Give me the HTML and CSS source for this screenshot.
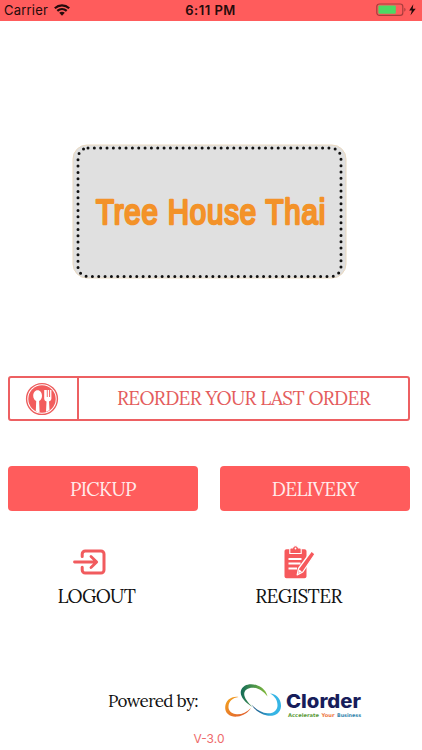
FILE: index.html
```html
<!DOCTYPE html>
<html lang="en">
<head>
    <meta charset="UTF-8">
    <meta name="viewport" content="width=device-width, initial-scale=1.0">
    <title>Tree House Thai</title>
    <link rel="stylesheet" href="styles.css">
</head>
<body>
    <div class="status-bar">
        <div class="status-left">
            <span>Carrier</span>
            <svg class="wifi" width="16" height="12" viewBox="0 0 16 12">
                <path d="M.8 4.200C5 .4 11 .4 15.200 4.200M3.300 6.900c2.800-2.500 6.600-2.500 9.400 0" fill="none" stroke="#250b0b" stroke-width="2.200"/>
                <path d="M5.200 8.800c1.600-1.400 4-1.400 5.600 0L8 11.700z" fill="#250b0b"/>
            </svg>
        </div>
        <div class="status-time">6:11 PM</div>
        <div class="status-right">
            <svg width="41" height="14" viewBox="0 0 41 14">
                <rect x=".8" y="1" width="26" height="11.4" rx="2.6" fill="none" stroke="#a83c3c" stroke-width="1.2"/>
                <rect x="2.4" y="2.6" width="17.4" height="8.2" rx="1" fill="#4cd964"/>
                <path d="M28.3 4.8c1.700.7 1.700 3.200 0 3.900z" fill="#a83c3c"/>
                <path d="M37.300 1.200L33.200 7.600h2.700l-1.500 4.900 5.300-6.700h-3z" fill="#250b0b"/>
            </svg>
        </div>
    </div>

    <div class="container">
        <svg class="brand" width="276" height="136" viewBox="0 0 276 136">
            <rect x="1" y="1" width="273" height="133" rx="14" fill="#e0e0e0" stroke="#ead9c0" stroke-width="1"/>
            <rect class="dots" x="6" y="4" width="263" height="128.5" rx="10"/>
            <text class="brand-name" x="24" y="80" textLength="230" lengthAdjust="spacingAndGlyphs">Tree House Thai</text>
        </svg>

        <button class="reorder">
            <span class="reorder-icon">
                <svg width="34" height="34" viewBox="0 0 34 34">
                    <circle cx="17" cy="17" r="15.4" fill="#fff" stroke="#ec5d5d" stroke-width="1.4"/>
                    <circle cx="17" cy="17" r="13.7" fill="#f25c5c"/>
                    <path d="M12.6 8.2c2.700 0 4.400 2.500 4.400 5.500 0 2.600-1.200 4.400-2.900 5.200l.5 11.500c-1.300-.2-2.700-.6-3.800-1.100l.4-10.400c-1.700-.8-3-2.600-3-5.200 0-3 1.700-5.500 4.400-5.500z" fill="#fff"/>
                    <path d="M19.200 8v8.500c0 1.600.9 2.600 2.300 3L21 29.700c1.200-.3 2.600-1 3.500-1.700l-.5-8.500c1.300-.4 2.400-1.400 2.400-3V8h-1.300v7h-1V8h-1.400v7h-.9V8z" fill="#fff"/>
                </svg>
            </span>
            <span class="reorder-text">REORDER YOUR LAST ORDER</span>
        </button>

        <div class="buttons">
            <button class="btn pickup">PICKUP</button>
            <button class="btn delivery">DELIVERY</button>
        </div>

        <div class="links">
            <a class="link logout">
                <svg width="34" height="34" viewBox="0 0 34 34" fill="none" stroke="#f15b5e" stroke-width="3" stroke-linecap="round" stroke-linejoin="round">
                    <path d="M9.2 11.5V9a3 3 0 0 1 3-3H28a3 3 0 0 1 3 3v16a3 3 0 0 1-3 3H12.200a3 3 0 0 1-3-3v-2.700"/>
                    <path d="M1.500 17H23M18 11.500l5.700 5.500-5.700 5.500" stroke-width="2.800"/>
                </svg>
                <span>LOGOUT</span>
            </a>
            <a class="link register">
                <svg width="34" height="34" viewBox="0 0 34 34">
                    <path d="M4.5 4.2h18c1.100 0 2 .9 2 2v25c0 1.100-.9 2-2 2h-18c-1.100 0-2-.9-2-2v-25c0-1.100.9-2 2-2z" fill="#f6595c"/>
                    <path d="M7.800 8.500V4.300c0-.7.500-1.300 1.200-1.300h1.500C11 1.300 12 .6 13.500.6s2.500.7 3 2.400H18c.7 0 1.200.6 1.200 1.300v4.200z" fill="#f6595c" stroke="#fff" stroke-width="1.100"/>
                    <circle cx="13.500" cy="3.500" r=".9" fill="#fff"/>
                    <path d="M6.500 14h13M6.500 18.500h12M6.500 23.500h8.500" stroke="#fff" stroke-width="2"/>
                    <path d="M29.500 6L16.500 23.500l-1.300 6.300 5.600-2.800L33 9z" fill="#f6595c" stroke="#fff" stroke-width="1.300" stroke-linejoin="round"/>
                    <path d="M17.200 24.500l2.700 2.100-3.600 1.700z" fill="#fff"/>
                </svg>
                <span>REGISTER</span>
            </a>
        </div>

        <div class="footer">
            <span class="powered">Powered by:</span>
            <svg class="clorder" width="140" height="38" viewBox="0 0 140 38">
                <defs>
                    <linearGradient id="orange" x1="0" y1="0" x2="1" y2="1">
                        <stop offset="0" stop-color="#f3a51e"/>
                        <stop offset="1" stop-color="#df5732"/>
                    </linearGradient>
                    <linearGradient id="green" x1="0" y1="0" x2="1" y2="0">
                        <stop offset="0" stop-color="#126b58"/>
                        <stop offset="1" stop-color="#86bd3b"/>
                    </linearGradient>
                    <linearGradient id="blue" x1="0" y1="0" x2="1" y2="0">
                        <stop offset="0" stop-color="#174a79"/>
                        <stop offset=".7" stop-color="#36b5e5"/>
                    </linearGradient>
                </defs>
                <path d="M14.500 14C7 13 1.800 17.500 1.200 24c-.5 6.500 5.300 10.500 12.300 9.600 5.500-.8 10.500-3.600 13.500-8.600-4.500 4.300-9 6.500-14 6.300C7.500 31 4 27.500 4.500 23c.5-4.500 4-8.300 10-9z" fill="url(#orange)"/>
                <path d="M28.500 24C20 19 15.500 12.500 17 7.500 19 1.500 26.500 0 33.500 2.500 39 4.500 42.500 8.500 43.500 13.500 39.500 8.500 35.500 5.500 30 4.800c-5.500-.5-9.800 2-9.800 6.200 0 4 3.800 8.500 8.300 13z" fill="url(#green)"/>
                <path d="M46 10.500C52 10.500 57.500 16 57 23.500 56.500 30.500 50 34 43 32.500 36.500 31.500 30.500 27 27.500 21.500c4.500 4.800 10 8.300 16 8.800 6 .5 10-3 10-8 0-5-2.500-9-7.500-11.800z" fill="url(#blue)"/>
                <text class="clorder-name" x="62" y="25" textLength="75" lengthAdjust="spacingAndGlyphs">Clorder</text>
                <text class="tagline" x="64" y="33.500" textLength="31" lengthAdjust="spacingAndGlyphs" fill="#5c9b3b">Accelerate</text>
                <text class="tagline" x="97.500" y="33.500" textLength="13" lengthAdjust="spacingAndGlyphs" fill="#ed733b">Your</text>
                <text class="tagline" x="113" y="33.500" textLength="24" lengthAdjust="spacingAndGlyphs" fill="#3485ad">Business</text>
            </svg>
        </div>
        <div class="version">V-3.0</div>
    </div>
</body>
</html>
```
FILE: styles.css
```css
* {
    box-sizing: border-box;
}
body {
    margin: 0;
    background-color: #fff;
    color: #111;
    font-family: Lora, "Liberation Serif", serif;
}
.status-bar {
    display: grid;
    grid-template-columns: 1fr auto 1fr;
    align-items: center;
    height: 21px;
    padding: 0 5px 1px 4px;
    background-color: #ff5c5c;
    color: #250b0b;
    font-family: Inter, sans-serif;
    font-size: 13px;
}
.status-left {
    display: flex;
    align-items: center;
    gap: 6px;
    letter-spacing: 0.2px;
}
.status-time {
    font-weight: 600;
    letter-spacing: 0.5px;
}
.status-right {
    display: flex;
    justify-content: flex-end;
}
.container {
    display: flex;
    flex-direction: column;
    padding: 123px 12px 0 8px;
}
.brand {
    align-self: center;
    margin-left: 1px;
    overflow: visible;
}
.dots {
    fill: none;
    stroke: #111;
    stroke-width: 3;
    stroke-linecap: round;
    stroke-dasharray: 0 6.34;
}
.brand-name {
    font-family: "Liberation Sans", Arial, sans-serif;
    font-size: 35.5px;
    letter-spacing: 1px;
    fill: #f39229;
    stroke: #f39229;
    stroke-width: 2.5;
    stroke-linejoin: round;
}
.reorder {
    display: flex;
    width: 402px;
    height: 45px;
    margin-top: 96px;
    padding: 0;
    border: 2px solid #ed6062;
    border-radius: 3px;
    background-color: #fff;
    color: #e45c5c;
    font-family: inherit;
    font-size: 19px;
    letter-spacing: -0.6px;
}
.reorder-icon {
    display: flex;
    align-items: center;
    justify-content: center;
    width: 69px;
    height: 100%;
    padding-right: 3px;
    border-right: 2px solid #ed6062;
}
.reorder-text {
    flex: 1;
    align-self: center;
    padding-bottom: 1px;
    text-align: center;
}
.buttons {
    display: grid;
    grid-template-columns: 190px 190px;
    gap: 22px;
    margin-top: 45px;
}
.btn {
    height: 45px;
    border: none;
    border-radius: 4px;
    background-color: #ff5c5c;
    color: #ffebeb;
    font-family: inherit;
    font-size: 19px;
    letter-spacing: -0.6px;
}
.links {
    display: grid;
    grid-template-columns: 177px 227px;
    margin-top: 34px;
}
.link {
    display: flex;
    flex-direction: column;
    align-items: center;
    gap: 5px;
    font-size: 19px;
    letter-spacing: -0.6px;
    line-height: 24px;
}
.link svg {
    margin-right: 14px;
}
.register svg {
    margin-right: 0;
}
.footer {
    display: flex;
    align-items: center;
    height: 38px;
    margin: 75px 0 0 100px;
}
.powered {
    width: 116px;
    padding-bottom: 2px;
    font-size: 17px;
    letter-spacing: -0.6px;
    white-space: nowrap;
}
.clorder-name {
    font-family: Inter, sans-serif;
    font-size: 19px;
    font-weight: 800;
    fill: #171d5b;
}
.tagline {
    font-family: "DejaVu Sans", sans-serif;
    font-size: 5px;
    font-weight: bold;
}
.version {
    margin-top: 10px;
    text-align: center;
    color: #ee6b6c;
    font-family: Inter, sans-serif;
    font-size: 12px;
    line-height: 16px;
}
```
